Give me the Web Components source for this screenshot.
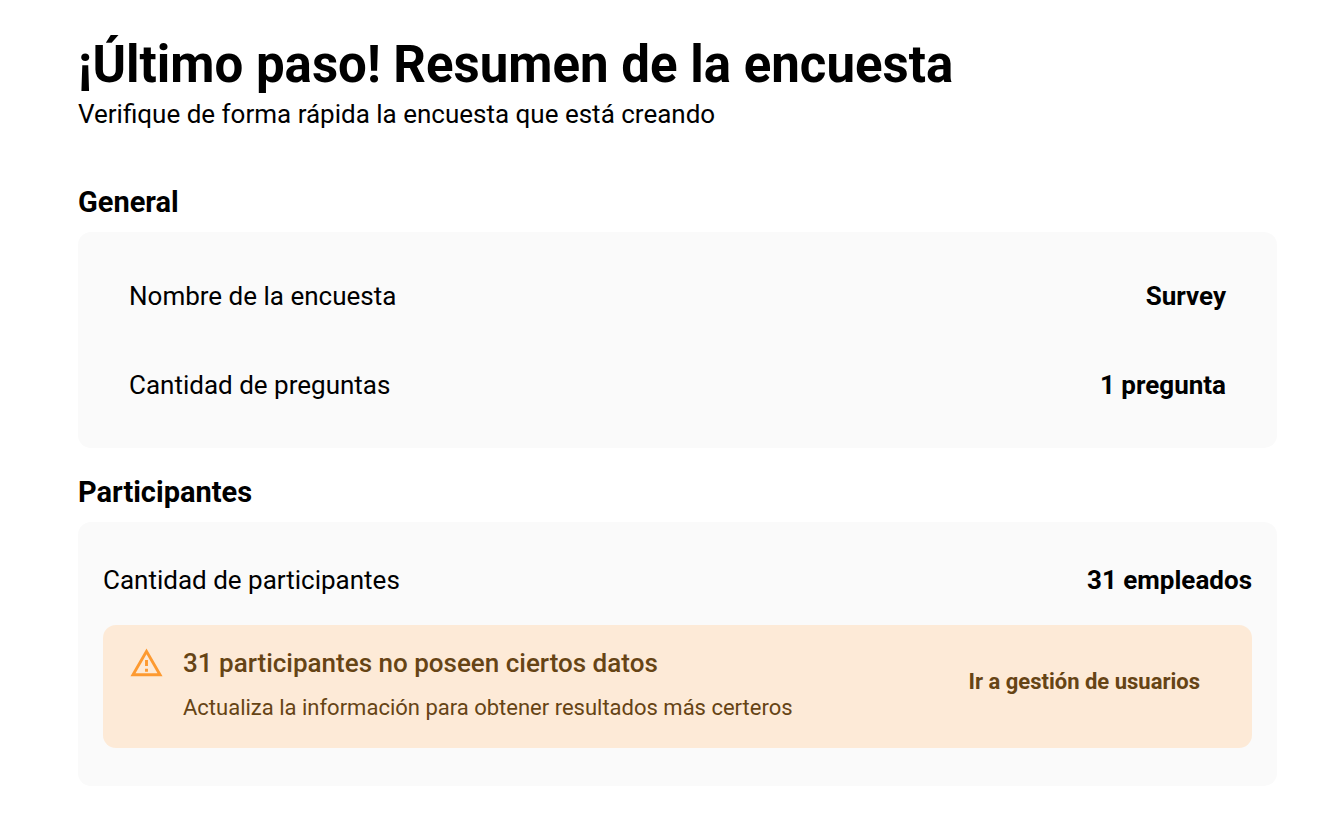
<!DOCTYPE html>
<html lang="es">
<head>
  <meta charset="UTF-8">
  <meta name="viewport" content="width=device-width, initial-scale=1.0">
  <title>Resumen de la encuesta</title>
  <style>
    body {
      margin: 0;
      background: #fff;
      color: #000;
      font-family: Roboto, "Liberation Sans", sans-serif;
      font-size: 26px;
      line-height: 38px;
    }
  </style>
</head>
<body>
  <survey-summary>
    <summary-section heading="General" inset>
      <summary-row label="Nombre de la encuesta">Survey</summary-row>
      <summary-row label="Cantidad de preguntas">1 pregunta</summary-row>
    </summary-section>
    <summary-section heading="Participantes">
      <summary-row label="Cantidad de participantes">31 empleados</summary-row>
      <summary-alert>
        <span slot="title">31 participantes no poseen ciertos datos</span>
        Actualiza la información para obtener resultados más certeros
        <span slot="action">Ir a gestión de usuarios</span>
      </summary-alert>
    </summary-section>
  </survey-summary>

  <script>
    class SurveySummary extends HTMLElement {
      connectedCallback() {
        this.attachShadow({ mode: 'open' });
        this.shadowRoot.innerHTML = `
          <style>
            :host {
              display: block;
              padding: 35px 65px 31px 78px;
            }

            h1 {
              margin: 0;
              font-size: 51px;
              font-weight: 700;
              line-height: 60px;
            }

            p {
              margin: 0 0 49px;
            }

            .sections {
              display: flex;
              flex-direction: column;
              gap: 24px;
            }
          </style>

          <main>
            <header>
              <h1>¡Último paso! Resumen de la encuesta</h1>
              <p>Verifique de forma rápida la encuesta que está creando</p>
            </header>
            <div class="sections"><slot></slot></div>
          </main>
        `;
      }
    }

    class SummarySection extends HTMLElement {
      connectedCallback() {
        this.attachShadow({ mode: 'open' });
        this.shadowRoot.innerHTML = `
          <style>
            :host {
              display: block;
            }

            h2 {
              margin: 0 0 10px;
              font-size: 29px;
              font-weight: 700;
              line-height: 40px;
            }

            .card {
              padding: 26px 25px 38px;
              border-radius: 13px;
              background: #fafafa;
            }

            /* Rows only: wider sides and evenly spaced rows */
            :host([inset]) .card {
              --row-padding: 26px 0 25px;
              padding: 19px 51px;
            }
          </style>

          <section>
            <h2>${this.getAttribute('heading')}</h2>
            <div class="card"><slot></slot></div>
          </section>
        `;
      }
    }

    class SummaryRow extends HTMLElement {
      connectedCallback() {
        this.attachShadow({ mode: 'open' });
        this.shadowRoot.innerHTML = `
          <style>
            :host {
              display: flex;
              align-items: center;
              justify-content: space-between;
              gap: 24px;
              padding: var(--row-padding, 13px 0 26px);
            }

            .value {
              font-weight: 700;
            }
          </style>

          <span>${this.getAttribute('label')}</span>
          <span class="value"><slot></slot></span>
        `;
      }
    }

    class SummaryAlert extends HTMLElement {
      connectedCallback() {
        this.attachShadow({ mode: 'open' });
        this.shadowRoot.innerHTML = `
          <style>
            :host {
              display: flex;
              align-items: center;
              gap: 19px;
              padding: 19px 52px 28px 26px;
              border-radius: 13px;
              background: #fdead7;
              color: #664415;
            }

            svg {
              flex: none;
              align-self: flex-start;
              width: 35px;
              height: 38px;
              fill: #fd9a31;
            }

            .message {
              flex: 1;
              font-size: 22px;
              line-height: 24px;
            }

            .title {
              margin-bottom: 14px;
              font-size: 26px;
              font-weight: 500;
              line-height: 38px;
            }

            a {
              color: inherit;
              font-size: 22px;
              font-weight: 700;
              text-decoration: none;
            }
          </style>

          <svg viewBox="0 0 24 24" aria-hidden="true">
            <path d="M12 5.99 19.53 19H4.47L12 5.99M12 2 1 21h22L12 2zm1 14h-2v2h2v-2zm0-6h-2v4h2v-4z"/>
          </svg>
          <div class="message">
            <div class="title"><slot name="title"></slot></div>
            <div><slot></slot></div>
          </div>
          <a href="#usuarios"><slot name="action"></slot></a>
        `;
      }
    }

    customElements.define('survey-summary', SurveySummary);
    customElements.define('summary-section', SummarySection);
    customElements.define('summary-row', SummaryRow);
    customElements.define('summary-alert', SummaryAlert);
  </script>
</body>
</html>
